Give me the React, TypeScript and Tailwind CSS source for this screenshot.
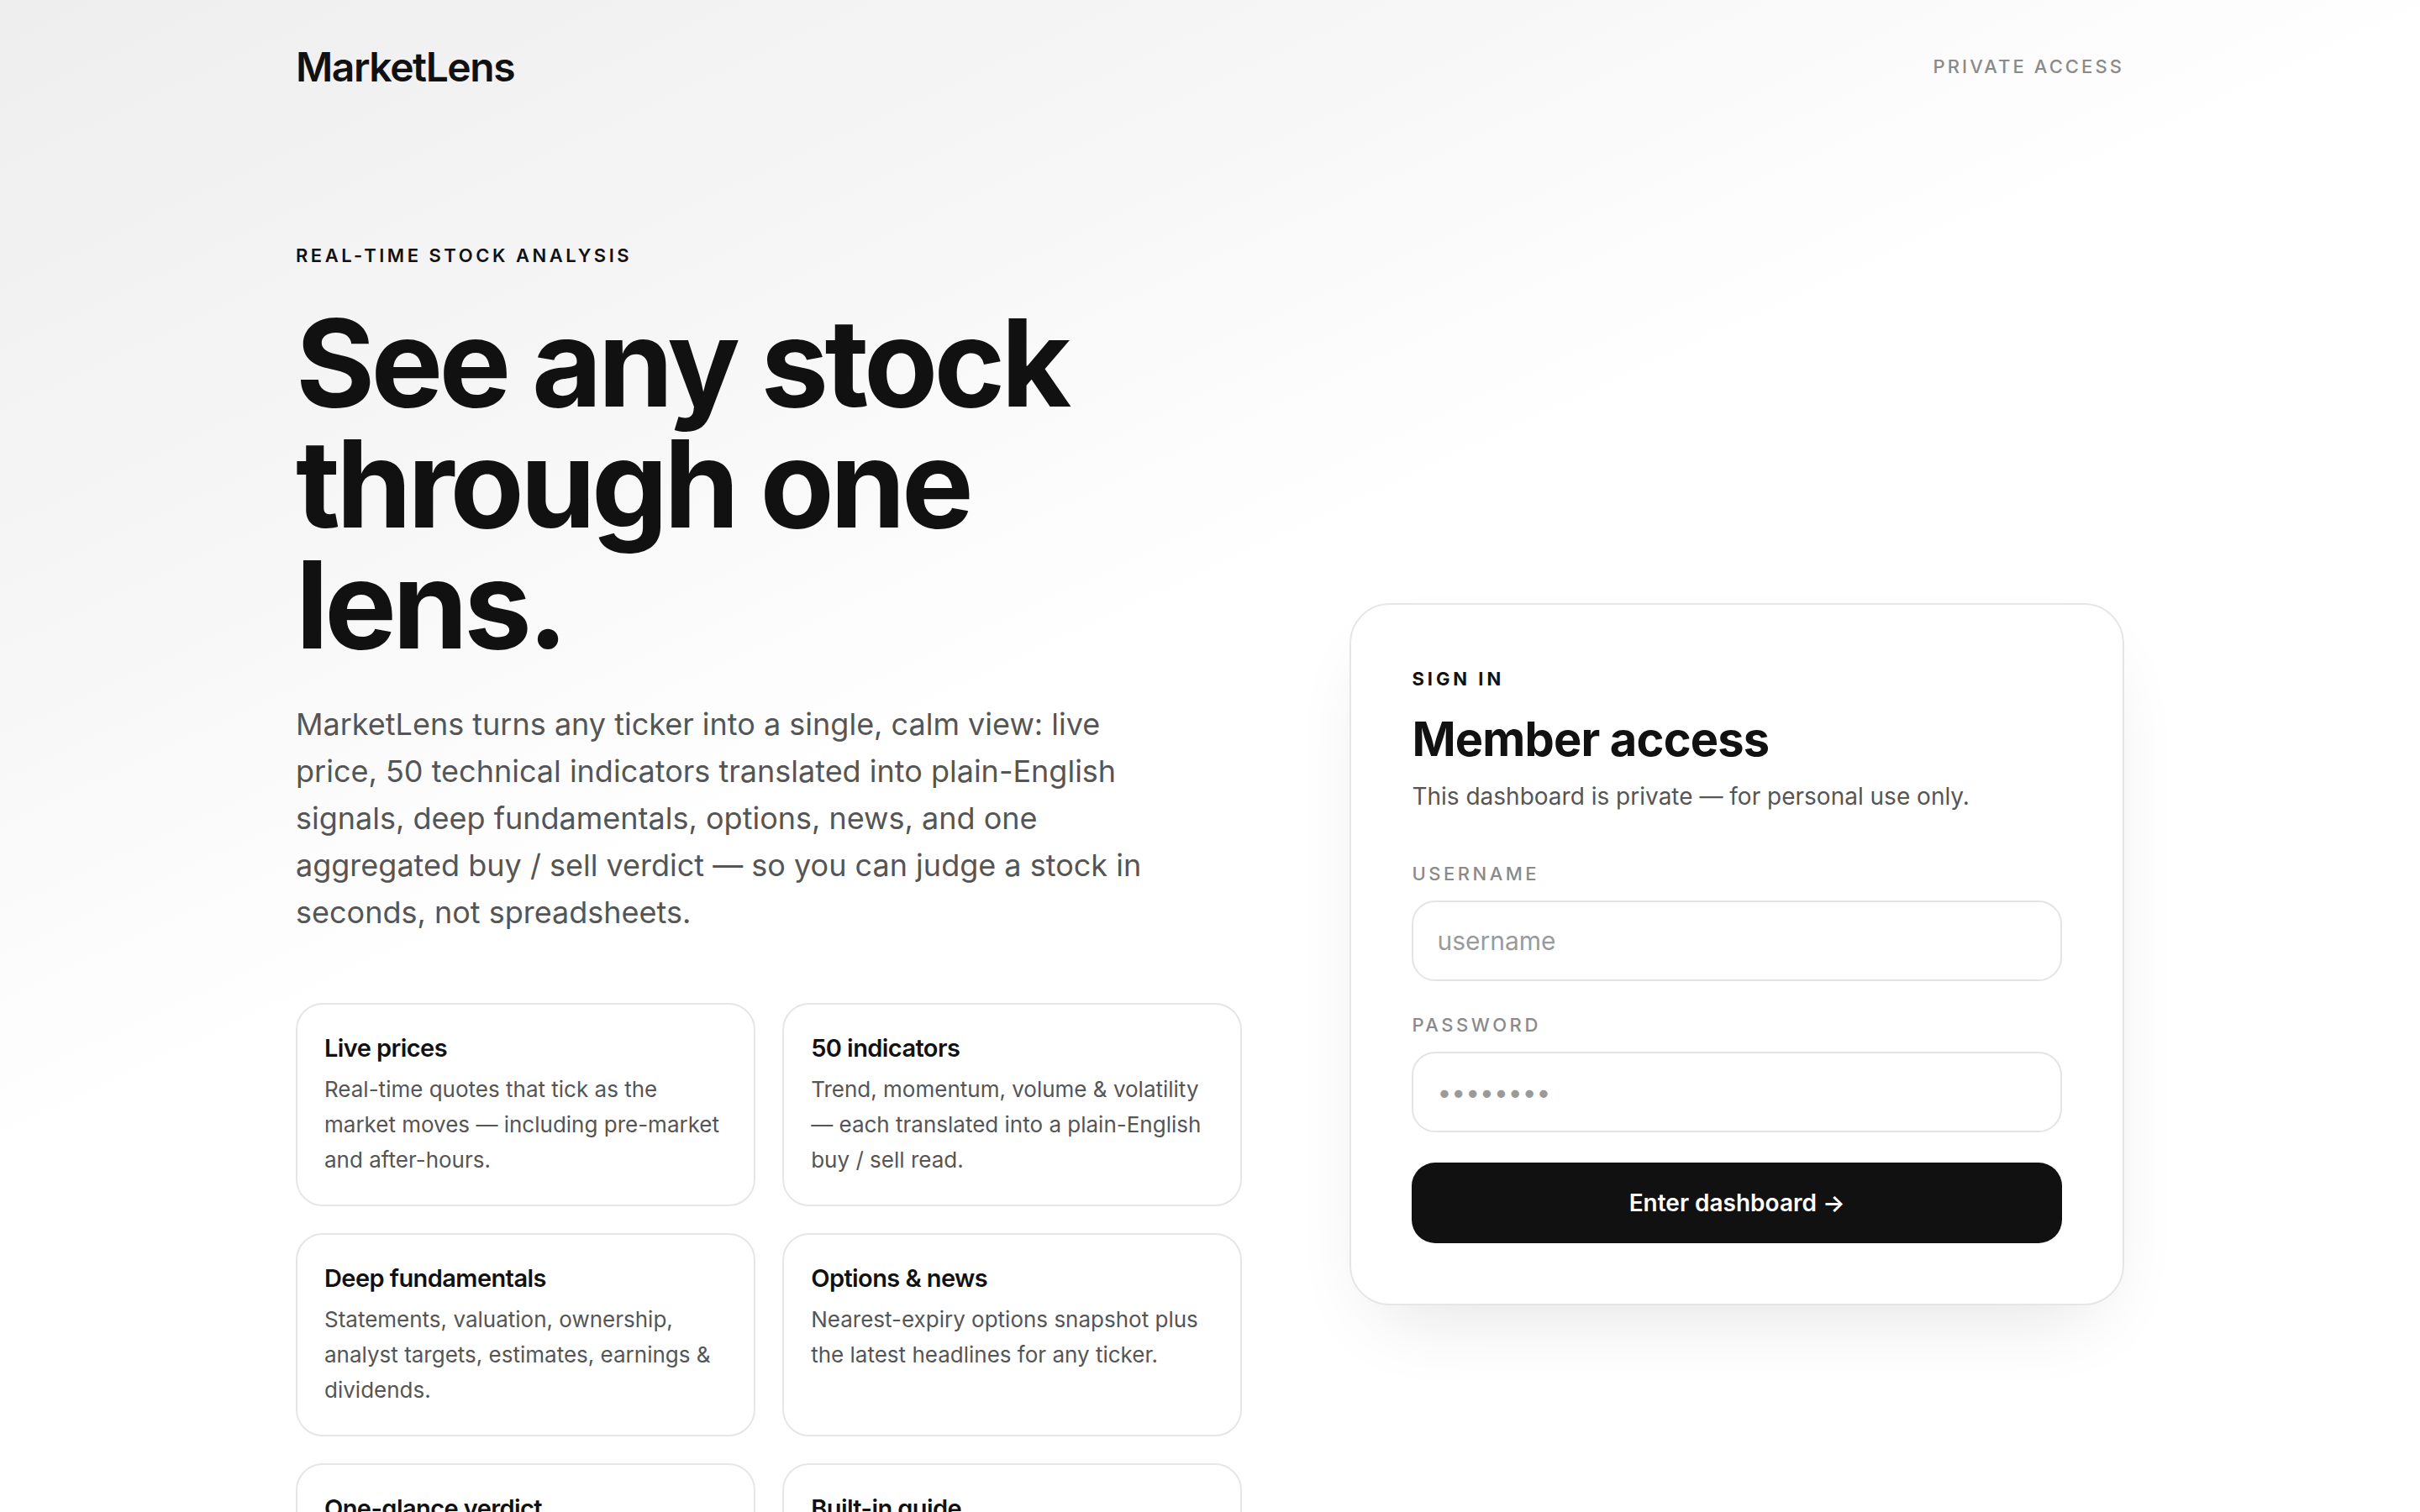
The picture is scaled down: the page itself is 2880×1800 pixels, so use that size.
import React from "react";

const features = [
  {
    title: "Live prices",
    desc: "Real-time quotes that tick as the market moves — including pre-market and after-hours.",
  },
  {
    title: "50 indicators",
    desc: "Trend, momentum, volume & volatility — each translated into a plain-English buy / sell read.",
  },
  {
    title: "Deep fundamentals",
    desc: "Statements, valuation, ownership, analyst targets, estimates, earnings & dividends.",
  },
  {
    title: "Options & news",
    desc: "Nearest-expiry options snapshot plus the latest headlines for any ticker.",
  },
  {
    title: "One-glance verdict",
    desc: "Every signal rolled into a single aggregated buy / sell score you can read at a glance.",
  },
  {
    title: "Built-in guide",
    desc: "Plain-English explanations for every metric, right next to the number it describes.",
  },
];

export default function App() {
  return (
    <div className="min-h-screen bg-[linear-gradient(155deg,#eeeeee_0%,#f6f6f6_22%,#ffffff_40%)] font-['Inter',sans-serif] text-[#111]">
      <div className="mx-auto max-w-[2304px] px-[64px] pb-[160px]">
        <header className="flex items-center justify-between py-[48px]">
          <div className="text-[48px] leading-[64px] font-semibold tracking-[-0.03em] text-[#111]">
            MarketLens
          </div>
          <div className="-mt-[2px] text-[22px] leading-[32px] font-medium tracking-[0.14em] text-[#8a8a8a]">
            PRIVATE ACCESS
          </div>
        </header>

        <main className="grid grid-cols-[1.1fr_0.9fr] items-center gap-[128px] pt-[128px]">
          <section>
            <div className="text-[22px] leading-[32px] font-semibold tracking-[0.16em] text-[#111]">
              REAL-TIME STOCK ANALYSIS
            </div>
            <h1 className="mt-[40px] text-[144px] leading-[144px] font-bold tracking-[-0.033em] text-[#111]">
              See any stock
              <br />
              through one
              <br />
              lens.
            </h1>
            <p className="mt-[42px] max-w-[1024px] text-[36px] leading-[56px] text-[#555]">
              MarketLens turns any ticker into a single, calm view: live price, 50 technical
              indicators translated into plain-English signals, deep fundamentals, options, news,
              and one aggregated buy / sell verdict — so you can judge a stock in seconds, not
              spreadsheets.
            </p>

            <div className="mt-[80px] grid grid-cols-2 gap-[32px]">
              {features.map((f) => (
                <div
                  key={f.title}
                  className="rounded-[32px] border-2 border-[#e6e6e6] bg-white p-[32px]"
                >
                  <div className="text-[29px] leading-[40px] font-semibold tracking-[-0.02em] text-[#111]">
                    {f.title}
                  </div>
                  <div className="mt-[8px] text-[26px] leading-[42px] text-[#555]">{f.desc}</div>
                </div>
              ))}
            </div>
          </section>

          <section className="rounded-[48px] border-2 border-[#e6e6e6] bg-white p-[72px] shadow-[0_40px_100px_-40px_rgba(0,0,0,0.14)]">
            <div className="text-[22px] leading-[32px] font-bold tracking-[0.18em] text-[#111]">
              SIGN IN
            </div>
            <h2 className="mt-[24px] text-[56px] leading-[64px] font-bold tracking-[-0.015em] text-[#111]">
              Member access
            </h2>
            <p className="mt-[16px] text-[28px] leading-[40px] text-[#555]">
              This dashboard is private — for personal use only.
            </p>

            <label className="mt-[56px] block text-[22px] leading-[32px] font-medium tracking-[0.16em] text-[#8a8a8a]">
              USERNAME
            </label>
            <input
              type="text"
              placeholder="username"
              className="mt-[16px] block h-[96px] w-full rounded-[28px] border-2 border-[#e4e4e4] bg-white px-[28px] text-[30px] text-[#111] outline-none placeholder:text-[#9a9a9a]"
            />

            <label className="mt-[36px] block text-[22px] leading-[32px] font-medium tracking-[0.16em] text-[#8a8a8a]">
              PASSWORD
            </label>
            <input
              type="text"
              placeholder="••••••••"
              className="mt-[16px] block h-[96px] w-full rounded-[28px] border-2 border-[#e4e4e4] bg-white px-[28px] text-[30px] text-[#111] outline-none placeholder:text-[#9a9a9a]"
            />

            <button
              type="button"
              className="mt-[36px] flex h-[96px] w-full items-center justify-center rounded-[28px] bg-[#111] text-[28px] font-semibold text-white"
            >
              Enter dashboard →
            </button>
          </section>
        </main>
      </div>
    </div>
  );
}
